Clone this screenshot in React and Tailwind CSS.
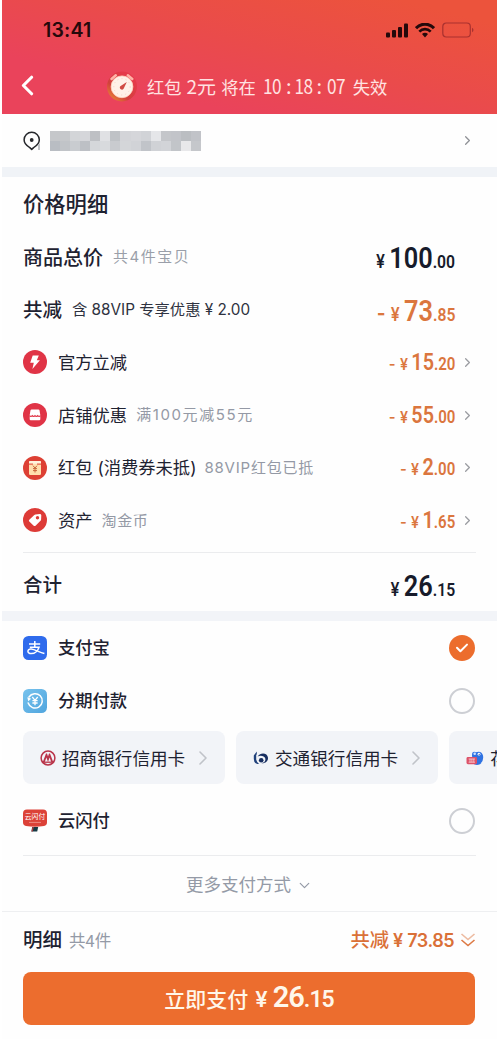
import React from "react";
import clsx from "clsx";
import { ChevronDown, ChevronLeft, ChevronRight } from "lucide-react";

// Blurred address, two rows of blocks
const mosaic = [
    "#c5c7ca", "#c6c8cb", "#d3d5d8", "#d5d6da", "#bec0c4", "#e0e1e4", "#bfc2c6", "#d3d4d8", "#d5d6da", "#d1d3d7", "#e5e6e9", "#c4c6ca", "#c2c4c9", "#bbbec2", "#c1c3c8",
    "#b9bdc3", "#c1c4c8", "#c9ccd0", "#bdc0c5", "#d5d7da", "#d8dadd", "#c9cbcf", "#d4d6d9", "#d1d3d7", "#c1c4c9", "#d0d2d6", "#d2d4d8", "#c2c5c9", "#e8e8ea", "#c5c7cb",
];

const discounts = [
    { title: "官方立减", icon: BoltIcon, int: "15", dec: ".20" },
    { title: "店铺优惠", note: "满100元减55元", noteClass: "ml-[9px] tracking-[1.6px]", icon: ShopIcon, int: "55", dec: ".00" },
    { title: "红包 (消费券未抵)", note: "88VIP红包已抵", noteClass: "ml-[8px] tracking-[0.8px]", icon: PacketIcon, int: "2", dec: ".00" },
    { title: "资产", note: "淘金币", noteClass: "ml-[9px] tracking-[0.6px]", icon: TagIcon, int: "1", dec: ".65" },
];

function SignalIcon() {
    return (
        <svg width="22" height="15" viewBox="0 0 22 15" fill="#25090b">
            <rect x="0" y="9.5" width="4" height="5" rx="1" />
            <rect x="6" y="7" width="4" height="7.5" rx="1" />
            <rect x="12" y="4" width="4" height="10.5" rx="1" />
            <rect x="18" y="0.5" width="4" height="14" rx="1" />
        </svg>
    );
}

function WifiIcon() {
    return (
        <svg width="20" height="15" viewBox="0 0 20 15" fill="none" stroke="#25090b">
            <path d="M1 5.2C6-.2 14-.2 19 5.2" strokeWidth="3" />
            <path d="M4.3 8.6c3.2-3.2 8.2-3.2 11.4 0" strokeWidth="2.7" />
            <path d="M7 10.9c1.8-1.5 4.2-1.5 6 0L10 14.4z" fill="#25090b" stroke="none" />
        </svg>
    );
}

function BatteryIcon() {
    return (
        <svg width="32" height="16" viewBox="0 0 32 16" fill="none">
            <rect x="0.8" y="1" width="27.5" height="14" rx="3.5" stroke="#a9312f" strokeWidth="1.2" />
            <path d="M30 5.8c2 .8 2 3.6 0 4.4z" fill="#a9312f" />
        </svg>
    );
}

function ClockIcon() {
    return (
        <svg width="34" height="34" viewBox="0 0 34 34" fill="none">
            <defs>
                <linearGradient id="clock" x1="0.1" y1="0.9" x2="0.7" y2="0.2">
                    <stop offset="0" stopColor="#e88335" />
                    <stop offset="0.4" stopColor="#d2403c" />
                    <stop offset="1" stopColor="#e53a4a" />
                </linearGradient>
            </defs>
            <circle cx="17" cy="17.5" r="15" fill="url(#clock)" />
            <path d="M6.5 10 10.8 6.3M22.8 6.3l4.5 3.7" stroke="#ffb3a8" strokeWidth="2.5" strokeLinecap="round" />
            <circle cx="17" cy="17.8" r="10.9" fill="#fff1e8" stroke="#ffd1bd" strokeWidth="0.8" />
            <circle cx="17" cy="17.8" r="8.2" stroke="#f5cdc0" strokeWidth="0.8" strokeDasharray="1.2 3" />
            <path d="m21.8 13-3.2 6.8c-1.8 2.2-5-.4-3.3-2.5z" fill="#d04b43" />
        </svg>
    );
}

function PinIcon() {
    return (
        <svg width="18" height="20" viewBox="0 0 18 20" fill="none">
            <path d="M6.8 16.6C3.4 14.7 1.1 12 1.1 8.8a7.6 7.6 0 0 1 15.2 0c0 3.2-2.3 5.9-5.7 7.8L8.7 18.4z" stroke="#26282c" strokeWidth="1.5" strokeLinejoin="round" />
            <circle cx="8.7" cy="9" r="1.9" fill="#26282c" />
            <path d="m15 14 2-2v7h-2z" fill="#bfc2c6" />
        </svg>
    );
}

function BoltIcon() {
    return (
        <svg width="24" height="24" viewBox="0 0 24 24">
            <circle cx="12" cy="12" r="12" fill="#e03446" />
            <path d="M9.7 5.5h6.1l-2 4.7h3.1L9.4 19l1.4-6.2H7.2z" fill="#fff" />
        </svg>
    );
}

function ShopIcon() {
    return (
        <svg width="24" height="24" viewBox="0 0 24 24">
            <circle cx="12" cy="12" r="12" fill="#e03446" />
            <path d="M8.6 6.4h6.8q.9 0 1.1.8l.8 4.8v4.2q0 1-1 1H7.7q-1 0-1-1V12l.8-4.8q.2-.8 1.1-.8z" fill="#fff" />
            <path d="M6.5 12.6q1.4 1.6 2.8.1 1.4 1.5 2.7 0 1.4 1.5 2.7 0 1.4 1.5 2.8-.1" stroke="#e03446" strokeWidth="1.2" fill="none" />
        </svg>
    );
}

function PacketIcon() {
    return (
        <svg width="24" height="24" viewBox="0 0 24 24">
            <circle cx="12" cy="12" r="12" fill="#dd4034" />
            <rect x="6" y="5" width="12" height="14" rx="1.3" fill="#ffdfae" />
            <path d="M6 6.3Q6 5 7.3 5h9.4Q18 5 18 6.3v1.5H6z" fill="#fff3dd" />
            <path d="M6 8.1h4M14 8.1h4" stroke="#dd4034" strokeWidth="1" />
            <path d="m10 9.7 2 2.3 2-2.3M12 12v4.5M10 12.6h4M10 14.6h4" stroke="#c9673d" strokeWidth="1" fill="none" />
        </svg>
    );
}

function TagIcon() {
    return (
        <svg width="24" height="24" viewBox="0 0 24 24">
            <circle cx="12" cy="12" r="12" fill="#dd3b37" />
            <path d="M12.4 6.5 16.8 6q1.4 0 1.5 1.3l-.2 4.3q0 .7-.6 1.2l-5 4.9q-.9.8-1.8 0l-4.4-4.2q-.9-.9 0-1.8l5-4.7q.5-.4 1.1-.5z" fill="#fff" />
            <circle cx="14.5" cy="9.8" r="1.7" fill="#dd3b37" />
        </svg>
    );
}

function AlipayIcon() {
    return (
        <svg width="24" height="24" viewBox="0 0 24 24" fill="none">
            <rect width="24" height="24" rx="5.5" fill="#2f6bec" />
            <path
                d="M6 8h11.2M11.8 5v6.2M6.8 11.2h9.2c-1 3.2-4 6.4-7.6 6.4-4.8 0-4.4-5-.2-4.5 4 .4 7.8 3.2 13.2 4.4"
                stroke="#fff"
                strokeWidth="1.5"
            />
        </svg>
    );
}

function InstallmentIcon() {
    return (
        <svg width="24" height="24" viewBox="0 0 24 24" fill="none">
            <defs>
                <linearGradient id="installment" x1="0" y1="0" x2="1" y2="1">
                    <stop stopColor="#78c3ed" />
                    <stop offset="1" stopColor="#50a5de" />
                </linearGradient>
            </defs>
            <rect width="24" height="24" rx="5.5" fill="url(#installment)" />
            <path d="M6 8a7.2 7.2 0 1 1-.8 6" stroke="#fff" strokeWidth="1.5" strokeLinecap="round" />
            <path d="m4.3 8.2.9 4 3-2.4z" fill="#fff" />
            <path d="m9.3 8 2.7 3.3L14.7 8M12 11v5.3M9.4 11.6h5.2M9.4 14h5.2" stroke="#fff" strokeWidth="1.3" />
        </svg>
    );
}

function UnionPayIcon() {
    return (
        <svg width="24" height="24" viewBox="0 0 24 24">
            <path d="M9.2 18h6l-1 4.4H8.4z" fill="#163b45" />
            <path d="M8.4 22.4 9.6 18h1.2l-1.1 4.4z" fill="#b53c3f" />
            <path d="M4 .5h16q4 0 4 4v8.8q0 3.2-3 3.6-9 1.5-18 0-3-.4-3-3.6V4.5q0-4 4-4z" fill="#dc4238" />
            <text x="12" y="10.4" fontSize="6.8" textAnchor="middle" fill="#fff">云闪付</text>
            <path d="M6 13.4h12" stroke="#f3aba5" strokeWidth="0.7" />
        </svg>
    );
}

function MerchantsBankIcon() {
    return (
        <svg width="16" height="16" viewBox="0 0 16 16" fill="none">
            <circle cx="8" cy="8" r="6.9" stroke="#b9344a" strokeWidth="1.5" />
            <path d="M2.8 12 6 3.6h1L8 6.6l1-3h1l3.2 8.4h-2l-1.6-4.4L8 12 6.4 7.6 4.8 12z" fill="#b9344a" />
            <path d="M1.8 12.2h12.4" stroke="#b9344a" strokeWidth="1.3" />
        </svg>
    );
}

function CommBankIcon() {
    return (
        <svg width="16" height="16" viewBox="0 0 16 16" fill="none">
            <path d="M.8 5.4 3.8 1.4v2.8L3.2 5v4.6q.4 2.8 3 4.4H4.4Q.8 13 .8 9z" fill="#20417b" />
            <path d="M4.6 6.4C7.4 2 14.6 2.6 15 7.7c.2 3.5-2.8 5.8-6.6 5.5 3.2-.6 4.5-2.4 3.9-4.6-.9-3.2-5.2-3.2-7.7-2.2z" fill="#182f61" />
            <circle cx="8.2" cy="10.2" r="2.3" fill="#182f61" />
        </svg>
    );
}

function HuabeiIcon() {
    return (
        <svg width="18" height="16" viewBox="0 0 18 16">
            <path d="M6 5Q6 .8 10 2.2q5.8-1.6 7 3.4 1 5.6-3 8.6-4 1.8-7.4-1z" fill="#2f72e2" />
            <circle cx="8.7" cy="3.8" r="1.3" fill="#cfe3ff" />
            <circle cx="13" cy="4.2" r="1.4" fill="#fff" />
            <circle cx="13.2" cy="4.3" r="0.6" fill="#174a9c" />
            <rect x="0.5" y="7" width="10.5" height="7.2" rx="1.4" fill="#dc5269" />
            <path d="M2.6 9h6.4M2.6 12.2h6.4M4 8.8v3.6M5.9 8.8v3.6M7.8 8.8v3.6" stroke="#ffd8dc" strokeWidth="0.7" />
        </svg>
    );
}

function Amount({ int, dec, minus, large }) {
    return (
        <span
            className={clsx(
                "flex origin-right scale-x-[0.86] items-baseline font-[Roboto] font-semibold whitespace-nowrap",
                minus ? "text-[#db763e]" : "text-[#171b2b]",
                large ? "pt-[5px]" : "pt-[2px]"
            )}
        >
            {minus && (
                <span className={clsx("font-[Inter]", large ? "mr-[6px] text-[22px]" : "mr-[5px] text-[17px] font-medium")}>-</span>
            )}
            <span className={clsx("font-[Inter]", large ? "mr-[5px] text-[18.5px]" : "mr-[4px] text-[16.5px]")}>¥</span>
            <span className={large ? "text-[29.5px] leading-[32px]" : "text-[23px] leading-[28px]"}>{int}</span>
            <span className={large ? "text-[18.3px]" : "text-[17.5px]"}>{dec}</span>
        </span>
    );
}

function Radio({ checked }) {
    if (!checked) return <span className="size-[26px] rounded-full border-2 border-[#cdcfd4]" />;
    return (
        <span className="flex size-[26px] items-center justify-center rounded-full bg-[#ec6d2d]">
            <svg width="14" height="12" viewBox="0 0 14 12" fill="none">
                <path d="m2 5.8 3.4 3.4L12 2.6" stroke="#fff" strokeWidth="2" strokeLinecap="round" strokeLinejoin="round" />
            </svg>
        </span>
    );
}

function PayRow({ icon: Icon, title, checked }) {
    return (
        <div className="flex h-[53px] items-center pr-[22px] pl-[21px]">
            <Icon />
            <span className="ml-[11px] flex-1 text-[17.3px] font-medium">{title}</span>
            <Radio checked={checked} />
        </div>
    );
}

function BankChip({ icon: Icon, title }) {
    return (
        <div className="flex h-[53px] w-[202px] shrink-0 items-center rounded-[8px] bg-[#f2f4f8] pl-[17px]">
            <Icon />
            <span className="ml-[6px] pt-[3px] text-[17.6px] whitespace-nowrap">{title}</span>
            <ChevronRight className="ml-[6px] shrink-0 text-[#c0c3c9]" size={24} strokeWidth={1.6} />
        </div>
    );
}

export default function App() {
    return (
        <div className="h-[1039px] w-[500px] overflow-hidden bg-white pl-[2px] font-[Inter,'Noto_Sans_CJK_SC',sans-serif] text-[#1e2231]">
            <div className="flex h-full w-[495px] flex-col overflow-hidden bg-[#fefefe]">
                {/* Header */}
                <header className="h-[114px] shrink-0 bg-[linear-gradient(14deg,#ea435b_25%,#ea4b4b_55%,#ec533c_90%)]">
                    <div className="flex h-[60px] items-center justify-between pr-[23px] pl-[41px] text-[#25090b]">
                        <span className="pt-px text-[19.5px] font-semibold tracking-[0.2px]">13:41</span>
                        <div className="flex items-center gap-[7px]">
                            <SignalIcon />
                            <WifiIcon />
                            <BatteryIcon />
                        </div>
                    </div>
                    <div className="flex h-[51px] items-center pl-[9px] text-[#ffe3e2]">
                        <ChevronLeft size={33} strokeWidth={2.3} className="text-white" />
                        <span className="ml-[61px]">
                            <ClockIcon />
                        </span>
                        <div className="ml-[8px] flex items-baseline text-[17.3px] whitespace-nowrap">
                            <span>红包</span>
                            <span className="ml-[5px] font-['Noto_Sans_CJK_SC'] text-[19px]">2元</span>
                            <span className="ml-[5px]">将在</span>
                            <span className="ml-[7px] flex w-[82px] justify-between font-['Noto_Sans_CJK_SC'] text-[20px] tracking-[-0.6px]">
                                <span className="origin-left scale-x-[0.86]">10</span>
                                <span>:</span>
                                <span className="scale-x-[0.86]">18</span>
                                <span>:</span>
                                <span className="origin-right scale-x-[0.86]">07</span>
                            </span>
                            <span className="ml-[8px]">失效</span>
                        </div>
                    </div>
                </header>

                {/* Address */}
                <div className="flex h-[53px] shrink-0 items-center pr-[22px] pl-[21px]">
                    <PinIcon />
                    <div className="ml-[9px] grid w-[151px] grid-cols-15">
                        {mosaic.map((color, i) => (
                            <span key={i} className="h-[10px]" style={{ backgroundColor: color }} />
                        ))}
                    </div>
                    <ChevronRight className="ml-auto text-[#8f9196]" size={15} strokeWidth={2} />
                </div>
                <div className="h-[10px] shrink-0 bg-[#f0f3f7]" />

                {/* Price details */}
                <section className="h-[434px] shrink-0">
                    <h2 className="flex h-[53px] items-center pt-[2px] pl-[21px] text-[21.3px] font-medium">价格明细</h2>
                    <div className="flex h-[53px] items-center pr-[42px] pl-[21px]">
                        <span className="pt-[2px] text-[20px] font-medium">商品总价</span>
                        <span className="ml-[10px] flex-1 pt-px text-[15px] tracking-[1.5px] text-[#9a9fa9]">共4件宝贝</span>
                        <Amount int="100" dec=".00" large />
                    </div>
                    <div className="flex h-[53px] items-center pr-[42px] pl-[21px]">
                        <span className="pt-[2px] text-[19.5px] font-medium">共减</span>
                        <span className="ml-[10px] flex-1 pt-[2px] text-[15.3px] text-[#2e3240]">含 88VIP 专享优惠 ¥ 2.00</span>
                        <Amount int="73" dec=".85" minus large />
                    </div>
                    {discounts.map(({ title, note, noteClass, icon: Icon, int, dec }) => (
                        <div key={title} className="flex h-[52.7px] items-center pr-[22px] pl-[21px]">
                            <Icon />
                            <span className="ml-[11px] pt-px text-[17.3px] whitespace-nowrap">{title}</span>
                            <span className={clsx("flex-1 pt-px text-[15px] whitespace-nowrap text-[#9499a5]", noteClass)}>{note}</span>
                            <Amount int={int} dec={dec} minus />
                            <ChevronRight className="ml-[5px] text-[#9a9ca1]" size={15} strokeWidth={2} />
                        </div>
                    ))}
                    <div className="mx-[21px] mt-[5px] h-px bg-[#ebecee]" />
                    <div className="flex h-[63px] items-center pr-[42px] pl-[21px]">
                        <span className="flex-1 pt-[2px] text-[19.5px] font-medium">合计</span>
                        <Amount int="26" dec=".15" large />
                    </div>
                </section>
                <div className="h-[10px] shrink-0 bg-[#f2f4f8]" />

                {/* Payment methods */}
                <section className="h-[290px] shrink-0">
                    <PayRow icon={AlipayIcon} title="支付宝" checked />
                    <PayRow icon={InstallmentIcon} title="分期付款" />
                    <div className="mt-[4px] flex gap-[11px] overflow-hidden pl-[21px]">
                        <BankChip icon={MerchantsBankIcon} title="招商银行信用卡" />
                        <BankChip icon={CommBankIcon} title="交通银行信用卡" />
                        <BankChip icon={HuabeiIcon} title="花" />
                    </div>
                    <div className="mt-[10px]">
                        <PayRow icon={UnionPayIcon} title="云闪付" />
                    </div>
                    <div className="mx-[21px] mt-[8px] h-px bg-[#ebecee]" />
                    <div className="flex h-[58px] items-center justify-center pt-px text-[17.5px] text-[#949aa6]">
                        更多支付方式
                        <ChevronDown className="ml-[5px]" size={17} strokeWidth={1.7} />
                    </div>
                </section>

                {/* Footer */}
                <footer className="flex-1 border-t border-[#eeeff1]">
                    <div className="flex h-[55px] items-center pt-px pr-[21px] pl-[21px]">
                        <span className="pt-px text-[19.5px] font-medium">明细</span>
                        <span className="ml-[7px] flex-1 font-['Noto_Sans_CJK_SC'] text-[16.5px] text-[#949aa6]">共4件</span>
                        <span className="flex items-baseline text-[19.3px] font-medium text-[#da7037]">
                            共减
                            <span className="ml-[4px] text-[18px] font-semibold">¥</span>
                            <span className="ml-[4px] text-[18px] font-semibold tracking-[-0.5px]">73.85</span>
                        </span>
                        <svg className="ml-[6px]" width="16" height="18" viewBox="0 0 16 18" fill="none" stroke="#dd7a45" strokeWidth="1.6">
                            <path d="m1.5 3 6.5 5.5L14.5 3" opacity="0.5" />
                            <path d="m1.5 9 6.5 5.5L14.5 9" />
                        </svg>
                    </div>
                    <button className="mt-[5px] ml-[21px] flex h-[53px] w-[452px] items-center justify-center rounded-[8px] bg-[#ec6d2e] text-[#fff7ea]">
                        <span className="flex items-baseline">
                            <span className="text-[21px] font-medium">立即支付</span>
                            <span className="ml-[7px] text-[22px] font-semibold">¥</span>
                            <span className="ml-[5px] font-[Roboto] text-[29px] leading-[34px] font-semibold tracking-[-1px]">26</span>
                            <span className="font-[Roboto] text-[23px] font-semibold tracking-[-1px]">.15</span>
                        </span>
                    </button>
                </footer>
            </div>
        </div>
    );
}
